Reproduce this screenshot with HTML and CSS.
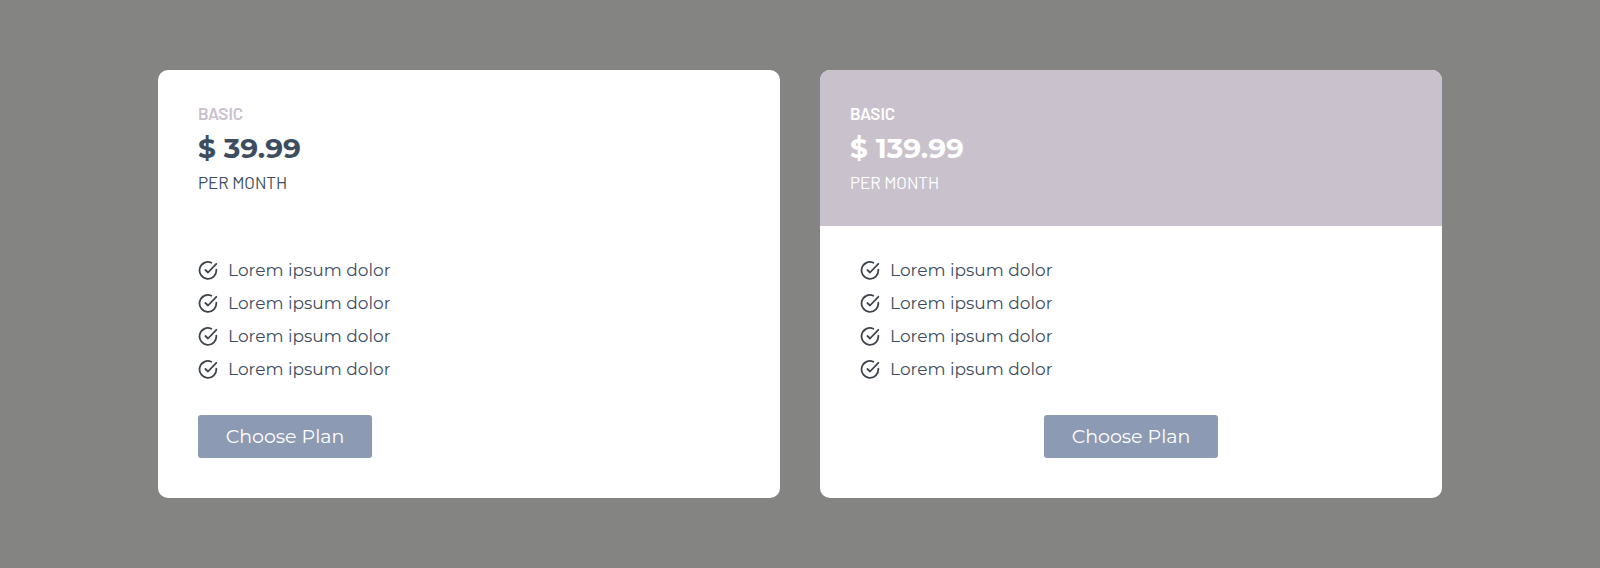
FILE: index.html
```html
<!DOCTYPE html>
<html lang="en">
<head>
    <meta charset="UTF-8">
    <meta name="viewport" content="width=device-width, initial-scale=1.0">
    <title>Pricing</title>
    <link rel="stylesheet" href="styles.css">
</head>
<body>
    <!-- check icon used by the lists -->
    <svg class="sprite" aria-hidden="true">
        <symbol id="check" viewBox="0 0 20 20">
            <path d="M13.3 1.7A8.4 8.4 0 1 0 18.3 8.6M7.4 9L10 11.5L18.3 2.8"/>
        </symbol>
    </svg>

    <main class="container">
        <section class="card">
            <div class="card-header">
                <h2 class="plan">BASIC</h2>
                <p class="price">$ 39.99</p>
                <p class="period">PER MONTH</p>
            </div>
            <div class="card-body">
                <ul class="list">
                    <li class="item"><svg class="icon"><use href="#check"/></svg>Lorem ipsum dolor</li>
                    <li class="item"><svg class="icon"><use href="#check"/></svg>Lorem ipsum dolor</li>
                    <li class="item"><svg class="icon"><use href="#check"/></svg>Lorem ipsum dolor</li>
                    <li class="item"><svg class="icon"><use href="#check"/></svg>Lorem ipsum dolor</li>
                </ul>
                <button type="button" class="btn">Choose Plan</button>
            </div>
        </section>

        <section class="card featured">
            <div class="card-header">
                <h2 class="plan">BASIC</h2>
                <p class="price">$ 139.99</p>
                <p class="period">PER MONTH</p>
            </div>
            <div class="card-body">
                <ul class="list">
                    <li class="item"><svg class="icon"><use href="#check"/></svg>Lorem ipsum dolor</li>
                    <li class="item"><svg class="icon"><use href="#check"/></svg>Lorem ipsum dolor</li>
                    <li class="item"><svg class="icon"><use href="#check"/></svg>Lorem ipsum dolor</li>
                    <li class="item"><svg class="icon"><use href="#check"/></svg>Lorem ipsum dolor</li>
                </ul>
                <button type="button" class="btn">Choose Plan</button>
            </div>
        </section>
    </main>
</body>
</html>
```
FILE: styles.css
```css
*{
    margin: 0;
    padding: 0;
    box-sizing: border-box;
}
body{
    background-color: #848482;
    color: #3c4d60;
    font-family: Montserrat, Inter, sans-serif;
}
.sprite{
    display: none;
}
.container{
    display: flex;
    flex-wrap: wrap;
    gap: 40px;
    max-width: 1284px;
    margin: 0 auto;
    padding: 70px 0;
}
/* cards */
.card{
    flex: 1 1 320px;
    background-color: white;
    border-radius: 10px;
    overflow: hidden;
}
.card-header{
    padding: 30px 40px 32px;
}
.plan,
.period{
    font-family: Barlow, Roboto, sans-serif;
    font-size: 17px;
}
.plan{
    color: #c9c1cc;
    font-weight: 600;
    line-height: 26px;
}
.price{
    font-size: 28px;
    font-weight: 700;
    line-height: 44px;
}
.period{
    font-weight: 400;
    line-height: 24px;
}
.card-body{
    display: flex;
    flex-direction: column;
    align-items: flex-start;
    padding: 28px 40px 40px;
}
/* list */
.list{
    align-self: stretch;
    list-style: none;
    margin-bottom: 29px;
}
.item{
    display: flex;
    align-items: center;
    gap: 10px;
    font-size: 17px;
    font-weight: 400;
    line-height: 33px;
}
.icon{
    width: 20px;
    height: 20px;
    fill: none;
    stroke: #3f444c;
    stroke-width: 1.8;
    stroke-linecap: round;
    stroke-linejoin: round;
}
.btn{
    min-width: 174px;
    padding: 0 20px;
    border: none;
    border-radius: 3px;
    background-color: #8c9ab4;
    color: white;
    font-family: inherit;
    font-size: 19px;
    font-weight: 400;
    line-height: 43px;
    cursor: pointer;
}
/* highlighted plan */
.featured .card-header{
    padding-left: 30px;
    padding-right: 30px;
    background-color: #c9c1cc;
    color: white;
}
.featured .plan{
    color: white;
}
.featured .btn{
    align-self: center;
}
```
